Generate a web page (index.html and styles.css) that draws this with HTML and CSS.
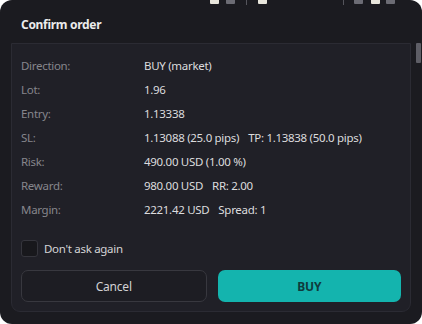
FILE: index.html
```html
<!DOCTYPE html>
<html>
<head>
<meta charset="utf-8">
<link rel="stylesheet" href="styles.css">
</head>
<body>
<div class="dialog">
  <div class="peek">
    <span class="sq light" style="left:210px"></span>
    <span class="sq gray" style="left:226px"></span>
    <span class="vline" style="left:246px"></span>
    <span class="sq light" style="left:258px"></span>
    <span class="vline" style="left:343px"></span>
    <span class="sq gray" style="left:354px"></span>
    <span class="sq light" style="left:371px"></span>
    <span class="sq gray" style="left:386px"></span>
  </div>
  <div class="header"><span class="title">Confirm order</span></div>
  <div class="body">
    <div class="panel">
      <div class="rows">
        <div class="row"><span class="label">Direction:</span><span class="value">BUY (market)</span></div>
        <div class="row"><span class="label">Lot:</span><span class="value">1.96</span></div>
        <div class="row"><span class="label">Entry:</span><span class="value">1.13338</span></div>
        <div class="row"><span class="label">SL:</span><span class="value">1.13088 (25.0 pips)<span class="extra">TP: 1.13838 (50.0 pips)</span></span></div>
        <div class="row"><span class="label">Risk:</span><span class="value">490.00 USD (1.00 %)</span></div>
        <div class="row"><span class="label">Reward:</span><span class="value">980.00 USD<span class="extra">RR: 2.00</span></span></div>
        <div class="row"><span class="label">Margin:</span><span class="value">2221.42 USD<span class="extra">Spread: 1</span></span></div>
      </div>
      <label class="check"><span class="box"></span><span>Don't ask again</span></label>
      <div class="buttons">
        <button class="btn cancel">Cancel</button>
        <button class="btn buy">BUY</button>
      </div>
    </div>
    <div class="scrollbar"><div class="thumb"></div></div>
  </div>
</div>
</body>
</html>
```
FILE: styles.css
```css
html, body {
  margin: 0;
  padding: 0;
  background: #ffffff;
}
body {
  font-family: "Noto Sans", "Open Sans", sans-serif;
  font-size: 11.5px;
  letter-spacing: -0.3px;
  color: #d8d8db;
}
.dialog {
  position: relative;
  width: 422px;
  height: 324px;
  background: #1b1b20;
  border-radius: 12px;
  overflow: hidden;
  display: flex;
  flex-direction: column;
}
.peek {
  position: absolute;
  top: 0;
  left: 0;
  right: 0;
  height: 5px;
}
.sq {
  position: absolute;
  top: 0;
  width: 9px;
  height: 4px;
  border-radius: 0 0 1px 1px;
}
.sq.light { background: #e8e6dc; }
.sq.gray { background: #6c6c74; }
.vline {
  position: absolute;
  top: 0;
  width: 1px;
  height: 5px;
  background: #55555c;
}
.header {
  height: 43px;
  display: flex;
  align-items: center;
  padding-left: 21px;
  padding-top: 5px;
  box-sizing: border-box;
}
.title {
  font-weight: 700;
  font-size: 12px;
  letter-spacing: -0.3px;
  color: #ececec;
}
.body {
  display: flex;
  flex: 1;
  min-height: 0;
}
.panel {
  margin-left: 11px;
  width: 400px;
  height: 269px;
  box-sizing: border-box;
  background: #202027;
  border: 1px solid #2b2b33;
  border-radius: 0 0 9px 9px;
  padding: 9px 9px 9px 9px;
  display: flex;
  flex-direction: column;
}
.rows {
  display: flex;
  flex-direction: column;
}
.row {
  height: 24px;
  display: flex;
  align-items: center;
  white-space: nowrap;
}
.label {
  width: 123px;
  color: #86868c;
}
.value {
  color: #dcdcde;
}
.extra {
  margin-left: 9px;
}
.check {
  margin-top: 19px;
  display: flex;
  align-items: center;
  gap: 6px;
  height: 17px;
  color: #d4d4d6;
}
.box {
  width: 15px;
  height: 15px;
  border: 1px solid #35353c;
  border-radius: 3px;
  background: #18181c;
}
.buttons {
  margin-top: 13px;
  display: flex;
  gap: 11px;
}
.btn {
  flex: 1;
  height: 32px;
  border-radius: 7px;
  font-family: "Noto Sans", "Open Sans", sans-serif;
  font-size: 12px;
  letter-spacing: -0.2px;
  padding: 0;
}
.cancel {
  background: #1d1d23;
  border: 1px solid #38383f;
  color: #d2d2d4;
}
.buy {
  background: #14b4ae;
  border: none;
  color: #0f3b3c;
  font-weight: 700;
}
.scrollbar {
  margin-left: 5px;
  width: 5px;
}
.thumb {
  width: 5px;
  height: 20px;
  background: #5e5e66;
  border-radius: 1px;
}
```
